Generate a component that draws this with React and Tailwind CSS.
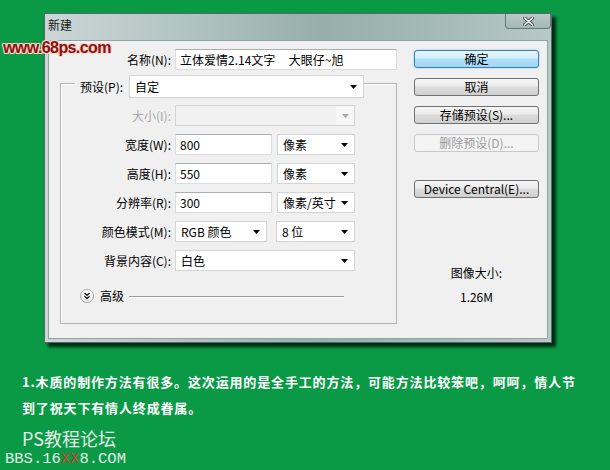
import React from "react";

const UI = "font-['Noto_Sans_CJK_SC','Noto_Sans',sans-serif]";

function Arrow({ gray }) {
  return (
    <svg width="7" height="4" viewBox="0 0 7 4" className="shrink-0">
      <path d="M0 0 L7 0 L3.5 4 Z" fill={gray ? "#a8a8a8" : "#000"} />
    </svg>
  );
}

function Select({ w, text, h = "h-[21px]" }) {
  return (
    <div className={`${w} ${h} flex items-center justify-between bg-white border border-[#d4d4d4] pl-[5px] pr-[6px] text-[12px] leading-none text-black`}>
      <span>{text}</span>
      <Arrow />
    </div>
  );
}

function Input({ w, text }) {
  return (
    <div className={`${w} h-[21px] flex items-center bg-white border border-[#d9dde2] border-t-[#abadb3] pl-[4px] text-[12px] leading-none text-black`}>
      {text}
    </div>
  );
}

function Row({ label, children, disabled }) {
  return (
    <div className="flex items-center h-[21px]">
      <div className={`w-[114px] text-right pr-[4px] text-[12px] leading-none ${disabled ? "text-[#a9a9a9]" : "text-black"}`}>
        {label}
      </div>
      <div className="flex items-center gap-[5px]">{children}</div>
    </div>
  );
}

function Btn({ children, kind }) {
  const base = "w-[125px] h-[18px] flex items-center justify-center rounded-[3px] border text-[12px] leading-none";
  if (kind === "default")
    return (
      <div className={`${base} border-[#3c7fb1] bg-[linear-gradient(#e5f5fd,#d3eefb_45%,#b0def7_50%,#9fd6f5)] text-black shadow-[0_0_2px_#7cc4ee]`}>
        {children}
      </div>
    );
  if (kind === "disabled")
    return <div className={`${base} border-[#c6c9cc] bg-[#f4f4f4] text-[#9a9a9a]`}>{children}</div>;
  return (
    <div className={`${base} border-[#707070] bg-[linear-gradient(#f6f6f6,#ebebeb_45%,#dddddd_50%,#cfcfcf)] text-black`}>
      {children}
    </div>
  );
}

export default function App() {
  return (
    <div className={`relative w-[610px] h-[470px] bg-[#0a9a46] overflow-hidden ${UI}`}>
      {/* dialog */}
      <div className="pt-[13px] pl-[44px]">
        <div className="w-[508px] h-[330px] flex flex-col border border-[#56686a] bg-[linear-gradient(90deg,#ccd6d6,#b4c6c4_25%,#97aeab_55%,#a3b9b6_75%,#b7c8c6)] shadow-[4px_4px_3px_rgba(0,25,8,0.85)]">
          {/* title bar */}
          <div className="h-[26px] flex items-start justify-between">
            <div className="pl-[3px] pt-[3px] text-[12px] leading-[16px] text-[#1a1a1a]">新建</div>
            <div className="w-[46px] h-[15px] rounded-b-[4px] border border-t-0 border-[#66797a] bg-[linear-gradient(#b9c9c8,#a4b7b6)] flex items-center justify-center">
              <svg width="11" height="9" viewBox="0 0 11 9">
                <path d="M1.5 1 L9.5 8 M9.5 1 L1.5 8" stroke="#3d4b4c" strokeWidth="3.4" strokeLinecap="round" />
                <path d="M1.5 1 L9.5 8 M9.5 1 L1.5 8" stroke="#ffffff" strokeWidth="1.6" strokeLinecap="round" />
              </svg>
            </div>
          </div>
          {/* client */}
          <div className="flex-1 px-[3px] pb-[3px]">
            <div className="w-full h-full bg-[#f0f0f0] border border-[#8fa3a3] flex">
              {/* left column */}
              <div className="w-[351px]">
                <div className="mt-[8px] flex items-center">
                  <div className="w-[126px] text-right pr-[4px] text-[12px] leading-none text-black">名称(N):</div>
                  <Input w="w-[222px]" text={<span className="whitespace-pre">立体爱情2.14文字     大眼仔~旭</span>} />
                </div>
                {/* group box */}
                <div className="ml-[11px] mt-[13px] w-[337px] h-[241px] border border-[#b4b4b4] shadow-[inset_1px_1px_0_#ffffff]">
                  <div className="-mt-[9px] flex items-center">
                    <div className="ml-[14px] bg-[#f0f0f0] pl-[5px] pr-[6px] text-[12px] leading-[22px] text-black">预设(P):</div>
                    <Select w="w-[235px]" h="h-[23px]" text="自定" />
                  </div>
                  <div className="mt-[7px] flex flex-col gap-[8px]">
                    <Row label="大小(I):" disabled>
                      <div className="w-[180px] h-[21px] flex border border-[#d4d4d4] bg-[#f1f1f1]">
                        <div className="flex-1" />
                        <div className="w-[18px] flex items-center justify-center bg-[#f7f7f7]">
                          <Arrow gray />
                        </div>
                      </div>
                    </Row>
                    <Row label="宽度(W):">
                      <Input w="w-[97px]" text="800" />
                      <Select w="w-[78px]" text="像素" />
                    </Row>
                    <Row label="高度(H):">
                      <Input w="w-[97px]" text="550" />
                      <Select w="w-[78px]" text="像素" />
                    </Row>
                    <Row label="分辨率(R):">
                      <Input w="w-[97px]" text="300" />
                      <Select w="w-[78px]" text="像素/英寸" />
                    </Row>
                    <Row label="颜色模式(M):">
                      <div className="flex items-center gap-[9px]">
                        <Select w="w-[92px]" text="RGB 颜色" />
                        <Select w="w-[79px]" text="8 位" />
                      </div>
                    </Row>
                    <Row label="背景内容(C):">
                      <Select w="w-[180px]" text="白色" />
                    </Row>
                  </div>
                  <div className="mt-[18px] flex items-center">
                    <div className="ml-[19px] w-[14px] h-[14px] rounded-full border border-[#a8a8a8] bg-[linear-gradient(#ffffff,#e6e6e6)] flex items-center justify-center">
                      <svg width="8" height="8" viewBox="0 0 8 8">
                        <path d="M1.5 1 L4 3.3 L6.5 1 M1.5 4.3 L4 6.6 L6.5 4.3" stroke="#222" strokeWidth="1.3" fill="none" />
                      </svg>
                    </div>
                    <div className="ml-[6px] text-[12px] leading-none text-black">高级</div>
                    <div className="ml-[5px] w-[215px] h-[1px] bg-[#9a9a9a] shadow-[0_1px_0_#ffffff]" />
                  </div>
                </div>
              </div>
              {/* right column */}
              <div className="ml-[14px] w-[125px] flex flex-col">
                <div className="mt-[9px] flex flex-col gap-[10px]">
                  <Btn kind="default">确定</Btn>
                  <Btn>取消</Btn>
                  <Btn>存储预设(S)...</Btn>
                  <Btn kind="disabled">删除预设(D)...</Btn>
                </div>
                <div className="mt-[28px]">
                  <Btn>Device Central(E)...</Btn>
                </div>
                <div className="mt-[67px] text-center text-[12px] leading-[16px] text-black">图像大小:</div>
                <div className="mt-[8px] text-center text-[12px] leading-[16px] text-black">1.26M</div>
              </div>
            </div>
          </div>
        </div>
      </div>

      {/* caption */}
      <div className="mt-[26px] pl-[22px] text-[13px] leading-[26px] font-bold text-white tracking-[0.85px]">
        <div>1.木质的制作方法有很多。这次运用的是全手工的方法，可能方法比较笨吧，呵呵，情人节</div>
        <div>到了祝天下有情人终成眷属。</div>
      </div>
      <div className="mt-[7px] pl-[22px] text-[18px] leading-[20px] text-[#e4ece6]">PS教程论坛</div>
      <div className="mt-[2px] pl-[5px] font-['Liberation_Mono',monospace] text-[15.5px] leading-[18px] text-[#e4ece6]">
        BBS.16<span className="text-[#d0392a]">XX</span>8.COM
      </div>

      {/* watermark */}
      <div className="absolute left-[3px] top-[38px] font-['Liberation_Sans',Arial,sans-serif] font-bold text-[16px] leading-[20px] tracking-[-0.6px] text-[#8b1010] [text-shadow:1px_0_0_#f7d6c8,-1px_0_0_#f7d6c8,0_1px_0_#f7d6c8,0_-1px_0_#f7d6c8,1px_1px_0_#f7d6c8,-1px_-1px_0_#f7d6c8,1px_-1px_0_#f7d6c8,-1px_1px_0_#f7d6c8]">
        www.68ps.com
      </div>
    </div>
  );
}
